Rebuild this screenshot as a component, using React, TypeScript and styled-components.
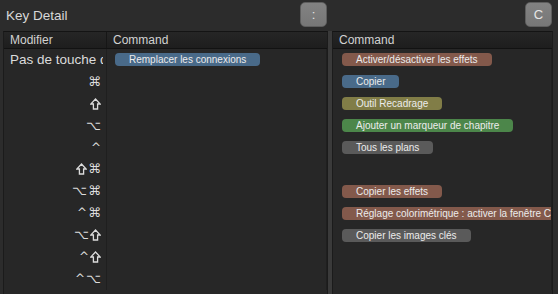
import React from 'react';
import styled, {createGlobalStyle} from 'styled-components';

const GlobalStyle = createGlobalStyle`
  html, body {
    margin: 0;
    padding: 0;
    background: #2c2c2c;
  }
  body {
    font-family: "Liberation Sans", Arial, sans-serif;
    color: #d6d6d6;
  }
`;

type PillTone = 'brown' | 'blue' | 'olive' | 'green' | 'gray';

const toneColors: Record<PillTone, string> = {
  brown: '#83594b',
  blue: '#496a89',
  olive: '#817d47',
  green: '#4c864a',
  gray: '#5a5a5a'
};

interface CommandItem {
  label: string;
  tone: PillTone;
}

const modifierRows: {modifier: string; command?: CommandItem}[] = [
  {modifier: '', command: {label: 'Remplacer les connexions', tone: 'blue'}},
  {modifier: '⌘'},
  {modifier: '⇧'},
  {modifier: '⌥'},
  {modifier: '^'},
  {modifier: '⇧⌘'},
  {modifier: '⌥⌘'},
  {modifier: '^⌘'},
  {modifier: '⌥⇧'},
  {modifier: '^⇧'},
  {modifier: '^⌥'}
];

const rightRows: (CommandItem | null)[] = [
  {label: 'Activer/désactiver les effets', tone: 'brown'},
  {label: 'Copier', tone: 'blue'},
  {label: 'Outil Recadrage', tone: 'olive'},
  {label: 'Ajouter un marqueur de chapitre', tone: 'green'},
  {label: 'Tous les plans', tone: 'gray'},
  null,
  {label: 'Copier les effets', tone: 'brown'},
  {label: 'Réglage colorimétrique : activer la fenêtre Correction', tone: 'brown'},
  {label: 'Copier les images clés', tone: 'gray'},
  null,
  null
];

// hollow shift arrow, the font's ⇧ is too small
const ShiftIcon = () => (
  <svg width="11" height="12" viewBox="0 0 11 12">
    <path d="M5.5 1 L10.2 6 H7.6 V11 H3.4 V6 H0.8 Z" fill="none" stroke="#dcdcdc" strokeWidth="1.3" strokeLinejoin="miter" />
  </svg>
);

function ModifierKeys({keys}: {keys: string}) {
  return (
    <Keys>
      {Array.from(keys).map((k, i) => (k === '⇧' ? <ShiftIcon key={i} /> : <KeyGlyph key={i} $caret={k === '^'}>{k}</KeyGlyph>))}
    </Keys>
  );
}

export default function App() {
  return (
    <>
      <GlobalStyle />
      <Root>
        <Pane $width={325}>
          <TopBar>
            <Title>Key Detail</Title>
            <KeyButton>:</KeyButton>
          </TopBar>
          <Table>
            <HeaderRow>
              <ModHeader>Modifier</ModHeader>
              <CmdHeader>Command</CmdHeader>
            </HeaderRow>
            {modifierRows.map((row, i) => (
              <Row key={i}>
                <ModCell $first={i === 0}>
                  {i === 0 ? <NoModifier>Pas de touche de modification</NoModifier> : <ModifierKeys keys={row.modifier} />}
                </ModCell>
                <CmdCell>{row.command && <Pill $tone={row.command.tone}>{row.command.label}</Pill>}</CmdCell>
              </Row>
            ))}
          </Table>
        </Pane>
        <Splitter />
        <Pane $width={221}>
          <TopBar>
            <span />
            <KeyButton>C</KeyButton>
          </TopBar>
          <Table>
            <HeaderRow>
              <CmdHeader>Command</CmdHeader>
            </HeaderRow>
            {rightRows.map((item, i) => (
              <Row key={i}>
                <CmdCell $wide>{item && <Pill $tone={item.tone}>{item.label}</Pill>}</CmdCell>
              </Row>
            ))}
          </Table>
        </Pane>
      </Root>
    </>
  );
}

const Root = styled.div`
  display: flex;
  width: 558px;
  height: 294px;
  padding-left: 3px;
  box-sizing: border-box;
  overflow: hidden;
  background: #2c2c2c;
`;

const Pane = styled.div<{$width: number}>`
  display: flex;
  flex-direction: column;
  width: ${(p) => p.$width}px;
  flex-shrink: 0;
`;

const TopBar = styled.div`
  display: flex;
  align-items: flex-start;
  justify-content: space-between;
  height: 31px;
  padding-top: 2px;
  box-sizing: border-box;
`;

const Title = styled.div`
  font-size: 13.5px;
  color: #d8d8d8;
  padding: 6px 0 0 3px;
  line-height: 16px;
`;

const KeyButton = styled.div`
  width: 27px;
  height: 25px;
  margin-right: 1px;
  box-sizing: border-box;
  border-radius: 5px;
  border: 1px solid #5e5e5e;
  background: linear-gradient(#828282, #777777);
  color: #e6e6e6;
  font-size: 13px;
  display: flex;
  align-items: center;
  justify-content: center;
`;

const Splitter = styled.div`
  width: 4px;
  flex-shrink: 0;
  margin-top: 31px;
  background: linear-gradient(90deg, #3a3a3a 0 40%, #2a2a2a 40% 60%, #3a3a3a 60%);
`;

const Table = styled.div`
  flex: 1;
  display: flex;
  flex-direction: column;
  background: #272727;
  border-left: 1px solid #1b1b1b;
  border-right: 1px solid #1b1b1b;
  border-top: 1px solid #141414;
  overflow: hidden;
`;

const HeaderRow = styled.div`
  display: flex;
  height: 16px;
  flex-shrink: 0;
  background: linear-gradient(#262626, #1e1e1e);
  border-bottom: 1px solid #121212;
  font-size: 12px;
  line-height: 16px;
  color: #d2d2d2;
`;

const ModHeader = styled.div`
  width: 103px;
  padding-left: 6px;
  box-sizing: border-box;
  border-right: 1px solid #161616;
`;

const CmdHeader = styled.div`
  flex: 1;
  padding-left: 6px;
`;

const Row = styled.div`
  display: flex;
  height: 21.9px;
  flex-shrink: 0;
`;

const ModCell = styled.div<{$first?: boolean}>`
  width: 103px;
  box-sizing: border-box;
  border-right: 1px solid #1f1f1f;
  padding: ${(p) => (p.$first ? '0 3px 0 6px' : '0 5px 0 0')};
  display: flex;
  align-items: center;
  justify-content: ${(p) => (p.$first ? 'flex-start' : 'flex-end')};
  color: #dcdcdc;
  overflow: hidden;
`;

const NoModifier = styled.span`
  font-size: 13.5px;
  white-space: nowrap;
  overflow: hidden;
  min-width: 0;
`;

const Keys = styled.span`
  display: flex;
  align-items: center;
  gap: 1px;
`;

const KeyGlyph = styled.span<{$caret?: boolean}>`
  font-family: "DejaVu Sans", sans-serif;
  font-size: ${(p) => (p.$caret ? '12px' : '13px')};
  line-height: 14px;
  color: #dcdcdc;
`;

const CmdCell = styled.div<{$wide?: boolean}>`
  flex: 1;
  min-width: 0;
  display: flex;
  align-items: center;
  padding: 0 3px 0 ${(p) => (p.$wide ? 9 : 8)}px;
  overflow: hidden;
  border-right: 1px solid #1f1f1f;
`;

const Pill = styled.div<{$tone: PillTone}>`
  flex-shrink: 0;
  height: 13px;
  line-height: 13px;
  padding: 0 14px;
  border-radius: 4px;
  background: ${(p) => toneColors[p.$tone]};
  color: #ececec;
  font-size: 10px;
  white-space: nowrap;
`;
